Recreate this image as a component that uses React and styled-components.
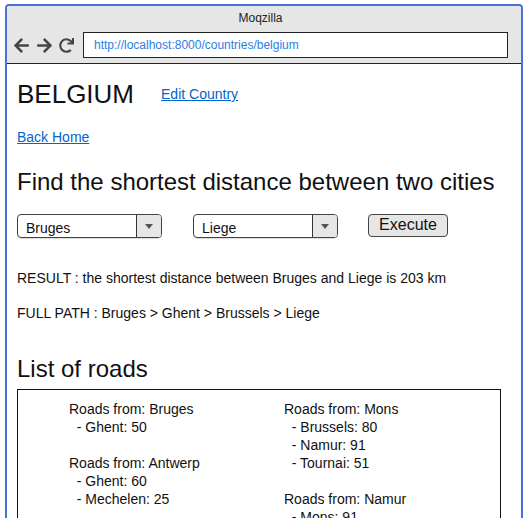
import React from 'react';
import styled, { createGlobalStyle } from 'styled-components';
import { FaArrowLeft, FaArrowRight, FaRedo } from 'react-icons/fa';

const GlobalStyle = createGlobalStyle`
  html, body {
    margin: 0;
    padding: 0;
    background: #fff;
    overflow: hidden;
  }
  body {
    font-family: "Liberation Sans", Arial, sans-serif;
    color: #111;
  }
`;

const Frame = styled.div`
  box-sizing: border-box;
  width: 518px;
  height: 560px;
  margin: 4px 0 0 5px;
  border: 2px solid #4a70dc;
  border-bottom: none;
  border-radius: 4px 4px 0 0;
  overflow: hidden;
`;

const TitleBar = styled.div`
  background: #e6e6e6;
  border-bottom: 1px solid #222;
  padding: 3px 13px 5px 6px;
`;

const Title = styled.div`
  text-align: center;
  font-size: 12px;
  line-height: 18px;
  color: #222;
  margin-bottom: 5px;
`;

const Toolbar = styled.div`
  display: flex;
  align-items: center;
  height: 26px;
`;

const NavButtons = styled.div`
  display: flex;
  align-items: center;
  width: 70px;
  color: #454545;
  gap: 6px;
`;

const AddressBar = styled.div`
  flex: 1;
  box-sizing: border-box;
  height: 26px;
  border: 1px solid #222;
  background: #fff;
  display: flex;
  align-items: center;
  padding-left: 10px;
  font-size: 12px;
  color: #2b7de9;
`;

const Content = styled.div`
  padding: 15px 0 0 10px;
`;

const HeaderRow = styled.div`
  display: flex;
  align-items: center;
  gap: 27px;
`;

const CountryName = styled.h1`
  margin: 0;
  font-size: 26px;
  line-height: 30px;
  font-weight: normal;
`;

const Link = styled.a`
  font-size: 14px;
  line-height: 16px;
  color: #0066cc;
  text-decoration: underline;
  display: block;
  margin-top: ${(p) => p.$top || 0}px;
`;

const SectionTitle = styled.h2`
  margin: ${(p) => p.$top}px 0 0;
  font-size: 24px;
  line-height: 28px;
  font-weight: normal;
`;

const Controls = styled.div`
  display: flex;
  align-items: flex-start;
  margin-top: 18px;
`;

const SelectBox = styled.div`
  box-sizing: border-box;
  width: 145px;
  height: 24px;
  border: 1px solid #444;
  border-radius: 4px;
  display: flex;
  overflow: hidden;
  margin-right: ${(p) => p.$gap}px;
  box-shadow: 0 1px 1px rgba(0, 0, 0, 0.15);
`;

const SelectValue = styled.div`
  flex: 1;
  font-size: 14px;
  line-height: 24px;
  padding-left: 8px;
  padding-top: 1px;
`;

const SelectArrow = styled.div`
  width: 24px;
  border-left: 1px solid #333;
  background: #e6e6e6;
  display: flex;
  align-items: center;
  justify-content: center;

  &::after {
    content: '';
    border-left: 4px solid transparent;
    border-right: 4px solid transparent;
    border-top: 5px solid #555;
  }
`;

const Button = styled.button`
  box-sizing: border-box;
  width: 80px;
  height: 23px;
  border: 1px solid #444;
  border-radius: 4px;
  background: #e6e6e6;
  font-family: inherit;
  font-size: 16px;
  line-height: 18px;
  color: #111;
  padding: 0 0 2px;
`;

const Text = styled.p`
  margin: ${(p) => p.$top}px 0 0;
  font-size: 14px;
  line-height: 16px;
`;

const RoadsBox = styled.div`
  box-sizing: border-box;
  width: 484px;
  margin-top: 6px;
  border: 1px solid #111;
  padding: 10px 0 20px 51px;
  display: grid;
  grid-template-columns: 215px 215px;
`;

const Column = styled.div`
  font-size: 14px;
  line-height: 18px;
`;

const Group = styled.div`
  margin-bottom: 18px;
`;

const Line = styled.div`
  white-space: pre;
`;

const left = [
  { from: 'Bruges', to: ['Ghent: 50'] },
  { from: 'Antwerp', to: ['Ghent: 60', 'Mechelen: 25'] },
];

const right = [
  { from: 'Mons', to: ['Brussels: 80', 'Namur: 91', 'Tournai: 51'] },
  { from: 'Namur', to: ['Mons: 91'] },
];

const Roads = ({ groups }) => (
  <Column>
    {groups.map((g) => (
      <Group key={g.from}>
        <Line>Roads from: {g.from}</Line>
        {g.to.map((t) => (
          <Line key={t}>{'  - ' + t}</Line>
        ))}
      </Group>
    ))}
  </Column>
);

const App = () => {
  return (
    <>
      <GlobalStyle />
      <Frame>
        <TitleBar>
          <Title>Moqzilla</Title>
          <Toolbar>
            <NavButtons>
              <FaArrowLeft size={17} />
              <FaArrowRight size={17} />
              <FaRedo size={15} />
            </NavButtons>
            <AddressBar>http://localhost:8000/countries/belgium</AddressBar>
          </Toolbar>
        </TitleBar>
        <Content>
          <HeaderRow>
            <CountryName>BELGIUM</CountryName>
            <Link href="#">Edit Country</Link>
          </HeaderRow>
          <Link href="#" $top={20}>Back Home</Link>
          <SectionTitle $top={23}>Find the shortest distance between two cities</SectionTitle>
          <Controls>
            <SelectBox $gap={31}>
              <SelectValue>Bruges</SelectValue>
              <SelectArrow />
            </SelectBox>
            <SelectBox $gap={30}>
              <SelectValue>Liege</SelectValue>
              <SelectArrow />
            </SelectBox>
            <Button>Execute</Button>
          </Controls>
          <Text $top={32}>RESULT : the shortest distance between Bruges and Liege is 203 km</Text>
          <Text $top={19}>FULL PATH : Bruges &gt; Ghent &gt; Brussels &gt; Liege</Text>
          <SectionTitle $top={34}>List of roads</SectionTitle>
          <RoadsBox>
            <Roads groups={left} />
            <Roads groups={right} />
          </RoadsBox>
        </Content>
      </Frame>
    </>
  );
};

export default App;
